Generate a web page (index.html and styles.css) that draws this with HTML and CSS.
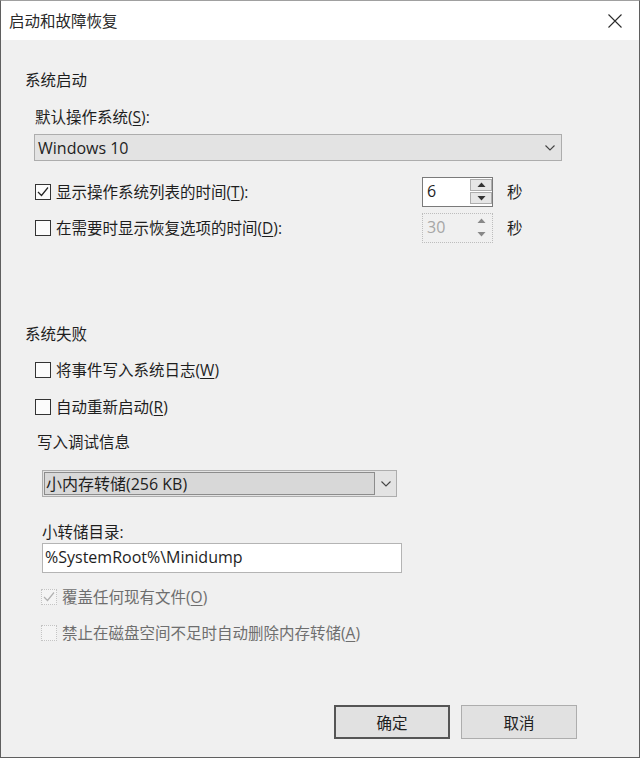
FILE: index.html
```html
<!DOCTYPE html>
<html lang="zh-CN">
<head>
<meta charset="utf-8">
<title>启动和故障恢复</title>
<link rel="stylesheet" href="styles.css">
</head>
<body>
<div class="window">
  <div class="titlebar">
    <span class="title">启动和故障恢复</span>
    <svg class="close" width="14" height="14" viewBox="0 0 14 14"><path d="M0.5 0.5 L13.5 13.5 M13.5 0.5 L0.5 13.5" stroke="#2b2b2b" stroke-width="1.1" fill="none"/></svg>
  </div>
  <div class="content">
    <div class="legend">系统启动</div>
    <div class="label l-os">默认操作系统(<u>S</u>):</div>
    <div class="select select-os">
      <span class="select-text">Windows 10</span>
      <svg class="chev" width="10" height="6" viewBox="0 0 10 6"><path d="M0.5 0.5 L5 5 L9.5 0.5" stroke="#444" stroke-width="1.1" fill="none"/></svg>
    </div>
    <div class="row spin-row r1">
      <span class="cb checked"><svg width="14" height="14" viewBox="0 0 14 14"><path d="M2 7 L5.5 10.5 L12 2.5" stroke="#222" stroke-width="1.2" fill="none"/></svg></span>
      <span class="cb-label wide-label">显示操作系统列表的时间(<u>T</u>):</span>
      <div class="spinner">
        <span class="spin-value">6</span>
        <div class="spin-btns">
          <span class="spin-btn"><svg width="9" height="6" viewBox="0 0 9 6"><path d="M4.5 0.5 L8.5 5 L0.5 5 Z" fill="#333"/></svg></span>
          <span class="spin-btn"><svg width="9" height="6" viewBox="0 0 9 6"><path d="M0.5 1 L8.5 1 L4.5 5.5 Z" fill="#333"/></svg></span>
        </div>
      </div>
      <span class="unit">秒</span>
    </div>
    <div class="row spin-row r2">
      <span class="cb"></span>
      <span class="cb-label wide-label">在需要时显示恢复选项的时间(<u>D</u>):</span>
      <div class="spinner disabled">
        <span class="spin-value">30</span>
        <div class="spin-btns">
          <span class="spin-btn"><svg width="9" height="6" viewBox="0 0 9 6"><path d="M4.5 0.5 L8.5 5 L0.5 5 Z" fill="#888"/></svg></span>
          <span class="spin-btn"><svg width="9" height="6" viewBox="0 0 9 6"><path d="M0.5 1 L8.5 1 L4.5 5.5 Z" fill="#888"/></svg></span>
        </div>
      </div>
      <span class="unit">秒</span>
    </div>

    <div class="legend legend-2">系统失败</div>
    <div class="row cb-row r3">
      <span class="cb"></span>
      <span class="cb-label">将事件写入系统日志(<u>W</u>)</span>
    </div>
    <div class="row cb-row r4">
      <span class="cb"></span>
      <span class="cb-label">自动重新启动(<u>R</u>)</span>
    </div>
    <div class="label l-debug">写入调试信息</div>
    <div class="select select-dump">
      <span class="select-field">小内存转储(256 KB)</span>
      <span class="select-arrow"><svg width="10" height="6" viewBox="0 0 10 6"><path d="M0.5 0.5 L5 5 L9.5 0.5" stroke="#444" stroke-width="1.1" fill="none"/></svg></span>
    </div>
    <div class="label l-dir">小转储目录:</div>
    <div class="textbox">%SystemRoot%\Minidump</div>
    <div class="row cb-row sub r5">
      <span class="cb checked disabled"><svg width="14" height="14" viewBox="0 0 14 14"><path d="M2 7 L5.5 10.5 L12 2.5" stroke="#b0b0b0" stroke-width="1.2" fill="none"/></svg></span>
      <span class="cb-label disabled-text">覆盖任何现有文件(<u>O</u>)</span>
    </div>
    <div class="row cb-row sub r6">
      <span class="cb disabled"></span>
      <span class="cb-label disabled-text">禁止在磁盘空间不足时自动删除内存转储(<u>A</u>)</span>
    </div>

    <div class="buttons">
      <button class="btn default">确定</button>
      <button class="btn">取消</button>
    </div>
  </div>
</div>
</body>
</html>
```
FILE: styles.css
```css
* { box-sizing: border-box; }
html, body { margin: 0; padding: 0; }
body {
  width: 640px;
  height: 759px;
  background: #ffffff;
  font-family: "Open Sans", "Noto Sans CJK SC", sans-serif;
  font-size: 15.5px;
  color: #1e1e1e;
  overflow: hidden;
}
u { text-decoration: underline; text-underline-offset: 2px; text-decoration-thickness: 1px; }

.window {
  width: 640px;
  height: 758px;
  border: 1px solid #5f5f5f;
  border-top-color: #a0a0a0;
  background: #f0f0f0;
  display: flex;
  flex-direction: column;
}
.titlebar {
  flex: none;
  height: 39px;
  background: #ffffff;
  display: flex;
  align-items: center;
  justify-content: space-between;
  padding: 0 17px 0 8px;
}
.title { line-height: 20px; color: #2a2a2a; }
.close { display: block; }

.content {
  flex: 1;
  padding: 30px 0 0 24px;
}
.legend { line-height: 20px; height: 20px; }
.legend-2 { margin-top: 81px; }

.label { line-height: 20px; height: 20px; }
.l-os { margin: 17px 0 0 10px; }
.l-debug { margin: 15px 0 0 12px; }
.l-dir { margin: 25px 0 0 17px; }

.select {
  height: 27px;
  border: 1px solid #adadad;
  background: #e3e3e3;
  display: flex;
  align-items: center;
  font-size: 16px;
}
.select-os {
  margin: 7px 0 0 9px;
  width: 528px;
  padding: 0 6px 0 3px;
  justify-content: space-between;
}
.select-text { line-height: 20px; }
.chev { display: block; }

.select-dump {
  margin: 18px 0 0 17px;
  width: 355px;
  align-items: stretch;
}
.select-field {
  width: 331px;
  border: 1px solid #8c8c8c;
  background: #d8d8d8;
  padding-left: 1px;
  line-height: 23px;
  margin: 1px 0 1px 1px;
}
.select-arrow {
  flex: 1;
  display: flex;
  align-items: center;
  justify-content: center;
}

.row { display: flex; align-items: center; margin-left: 10px; }
.spin-row { height: 30px; }
.r1 { margin-top: 16px; }
.r2 { margin-top: 6px; }
.cb-row { height: 20px; }
.r3 { margin-top: 16px; }
.r4 { margin-top: 17px; }
.sub { margin-left: 16px; }
.r5 { margin-top: 14px; }
.r6 { margin-top: 16px; }

.cb {
  flex: none;
  width: 16px;
  height: 16px;
  border: 1px solid #333333;
  background: #fbfbfb;
  display: flex;
  align-items: center;
  justify-content: center;
}
.cb svg { display: block; }
.cb.disabled {
  border: 1px dotted #c4c4c4;
  background: #f4f4f4;
}
.cb-label { margin-left: 5px; line-height: 20px; white-space: nowrap; }
.wide-label { width: 366px; }
.disabled-text { color: #6e6e6e; }

.spinner {
  flex: none;
  width: 71px;
  height: 30px;
  border: 1px solid #7a7a7a;
  background: #ffffff;
  display: flex;
  justify-content: space-between;
}
.spin-value {
  padding: 3px 0 0 4px;
  line-height: 20px;
  font-size: 16px;
}
.spin-btns {
  width: 22px;
  display: flex;
  flex-direction: column;
  gap: 1px;
  padding: 1px 0 2px 0;
}
.spin-btn {
  flex: 1;
  border: 1px solid #adadad;
  background: #e6e6e6;
  display: flex;
  align-items: center;
  justify-content: center;
}
.spin-btn svg { display: block; }
.spinner.disabled {
  border: 1px dotted #bdbdbd;
  background: #f0f0f0;
  color: #a6a6a6;
}
.spinner.disabled .spin-btn { border-color: transparent; background: transparent; }
.unit { margin-left: 14px; line-height: 20px; }

.textbox {
  margin: 1px 0 0 17px;
  width: 360px;
  height: 30px;
  border: 1px solid #b4b4b4;
  background: #ffffff;
  font-size: 16px;
  line-height: 26px;
  padding-left: 2px;
}

.buttons {
  display: flex;
  gap: 11px;
  margin: 62px 0 0 309px;
}
.btn {
  width: 116px;
  height: 34px;
  font: inherit;
  color: #1e1e1e;
  background: #e1e1e1;
  border: 1px solid #adadad;
  padding: 0;
}
.btn.default { border: 2px solid #555555; }
```
